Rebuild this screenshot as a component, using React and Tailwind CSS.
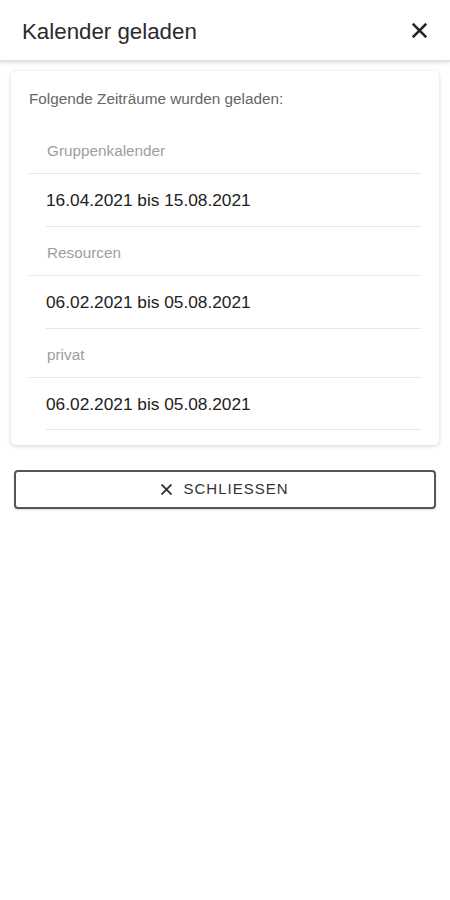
import React from 'react'

const periods = [
  { label: 'Gruppenkalender', range: '16.04.2021 bis 15.08.2021' },
  { label: 'Resourcen', range: '06.02.2021 bis 05.08.2021' },
  { label: 'privat', range: '06.02.2021 bis 05.08.2021' },
]

const CloseIcon = ({ size = 14, stroke = 2.4 }) => (
  <svg width={size} height={size} viewBox="0 0 14 14" fill="none">
    <path d="M1.5 1.5L12.5 12.5M12.5 1.5L1.5 12.5" stroke="currentColor" strokeWidth={stroke} strokeLinecap="square" />
  </svg>
)

const App = () => {
  return (
    <div className="w-[450px] min-h-[900px] bg-white font-['Liberation_Sans',Arial,sans-serif]">
      {/* Header */}
      <header className="h-[62px] flex items-center justify-between pl-[22px] pr-[23px] border-b-2 border-[#e2e2e2] shadow-[0_2px_3px_rgba(0,0,0,0.08)]">
        <h1 className="pt-[3px] text-[22.3px] text-[#2a2a2a]">Kalender geladen</h1>
        <button className="text-[#222]">
          <CloseIcon size={15} />
        </button>
      </header>

      {/* Card */}
      <div className="mx-[11px] mt-[9px] rounded-[5px] bg-white shadow-[0_1px_4px_rgba(0,0,0,0.18)] pt-[18px] px-[18px] pb-[15px]">
        <p className="text-[15.3px] leading-[20px] text-[#666]">Folgende Zeiträume wurden geladen:</p>
        <div className="mt-[16px]">
          {periods.map(({ label, range }, i) => (
            <div key={label}>
              <div className="h-[49px] flex items-center pl-[18px] pt-[4px] text-[15.3px] text-[#9e9e9e] border-b border-[#e6e6e6]">
                {label}
              </div>
              <div className={`ml-[17px] flex items-center pt-[2px] text-[17.3px] text-[#222] border-b border-[#e6e6e6] ${i === periods.length - 1 ? 'h-[52px]' : 'h-[53px]'}`}>
                {range}
              </div>
            </div>
          ))}
        </div>
      </div>

      {/* Close button */}
      <button className="mx-[14px] mt-[25px] w-[422px] h-[39px] flex items-center justify-center gap-[11px] border-2 border-[#555] rounded-[4px] text-[#333] shadow-[0_1px_2px_rgba(0,0,0,0.15)]">
        <CloseIcon size={11} stroke={2.4} />
        <span className="text-[15px] tracking-[1px]">SCHLIESSEN</span>
      </button>
    </div>
  )
}

export default App
